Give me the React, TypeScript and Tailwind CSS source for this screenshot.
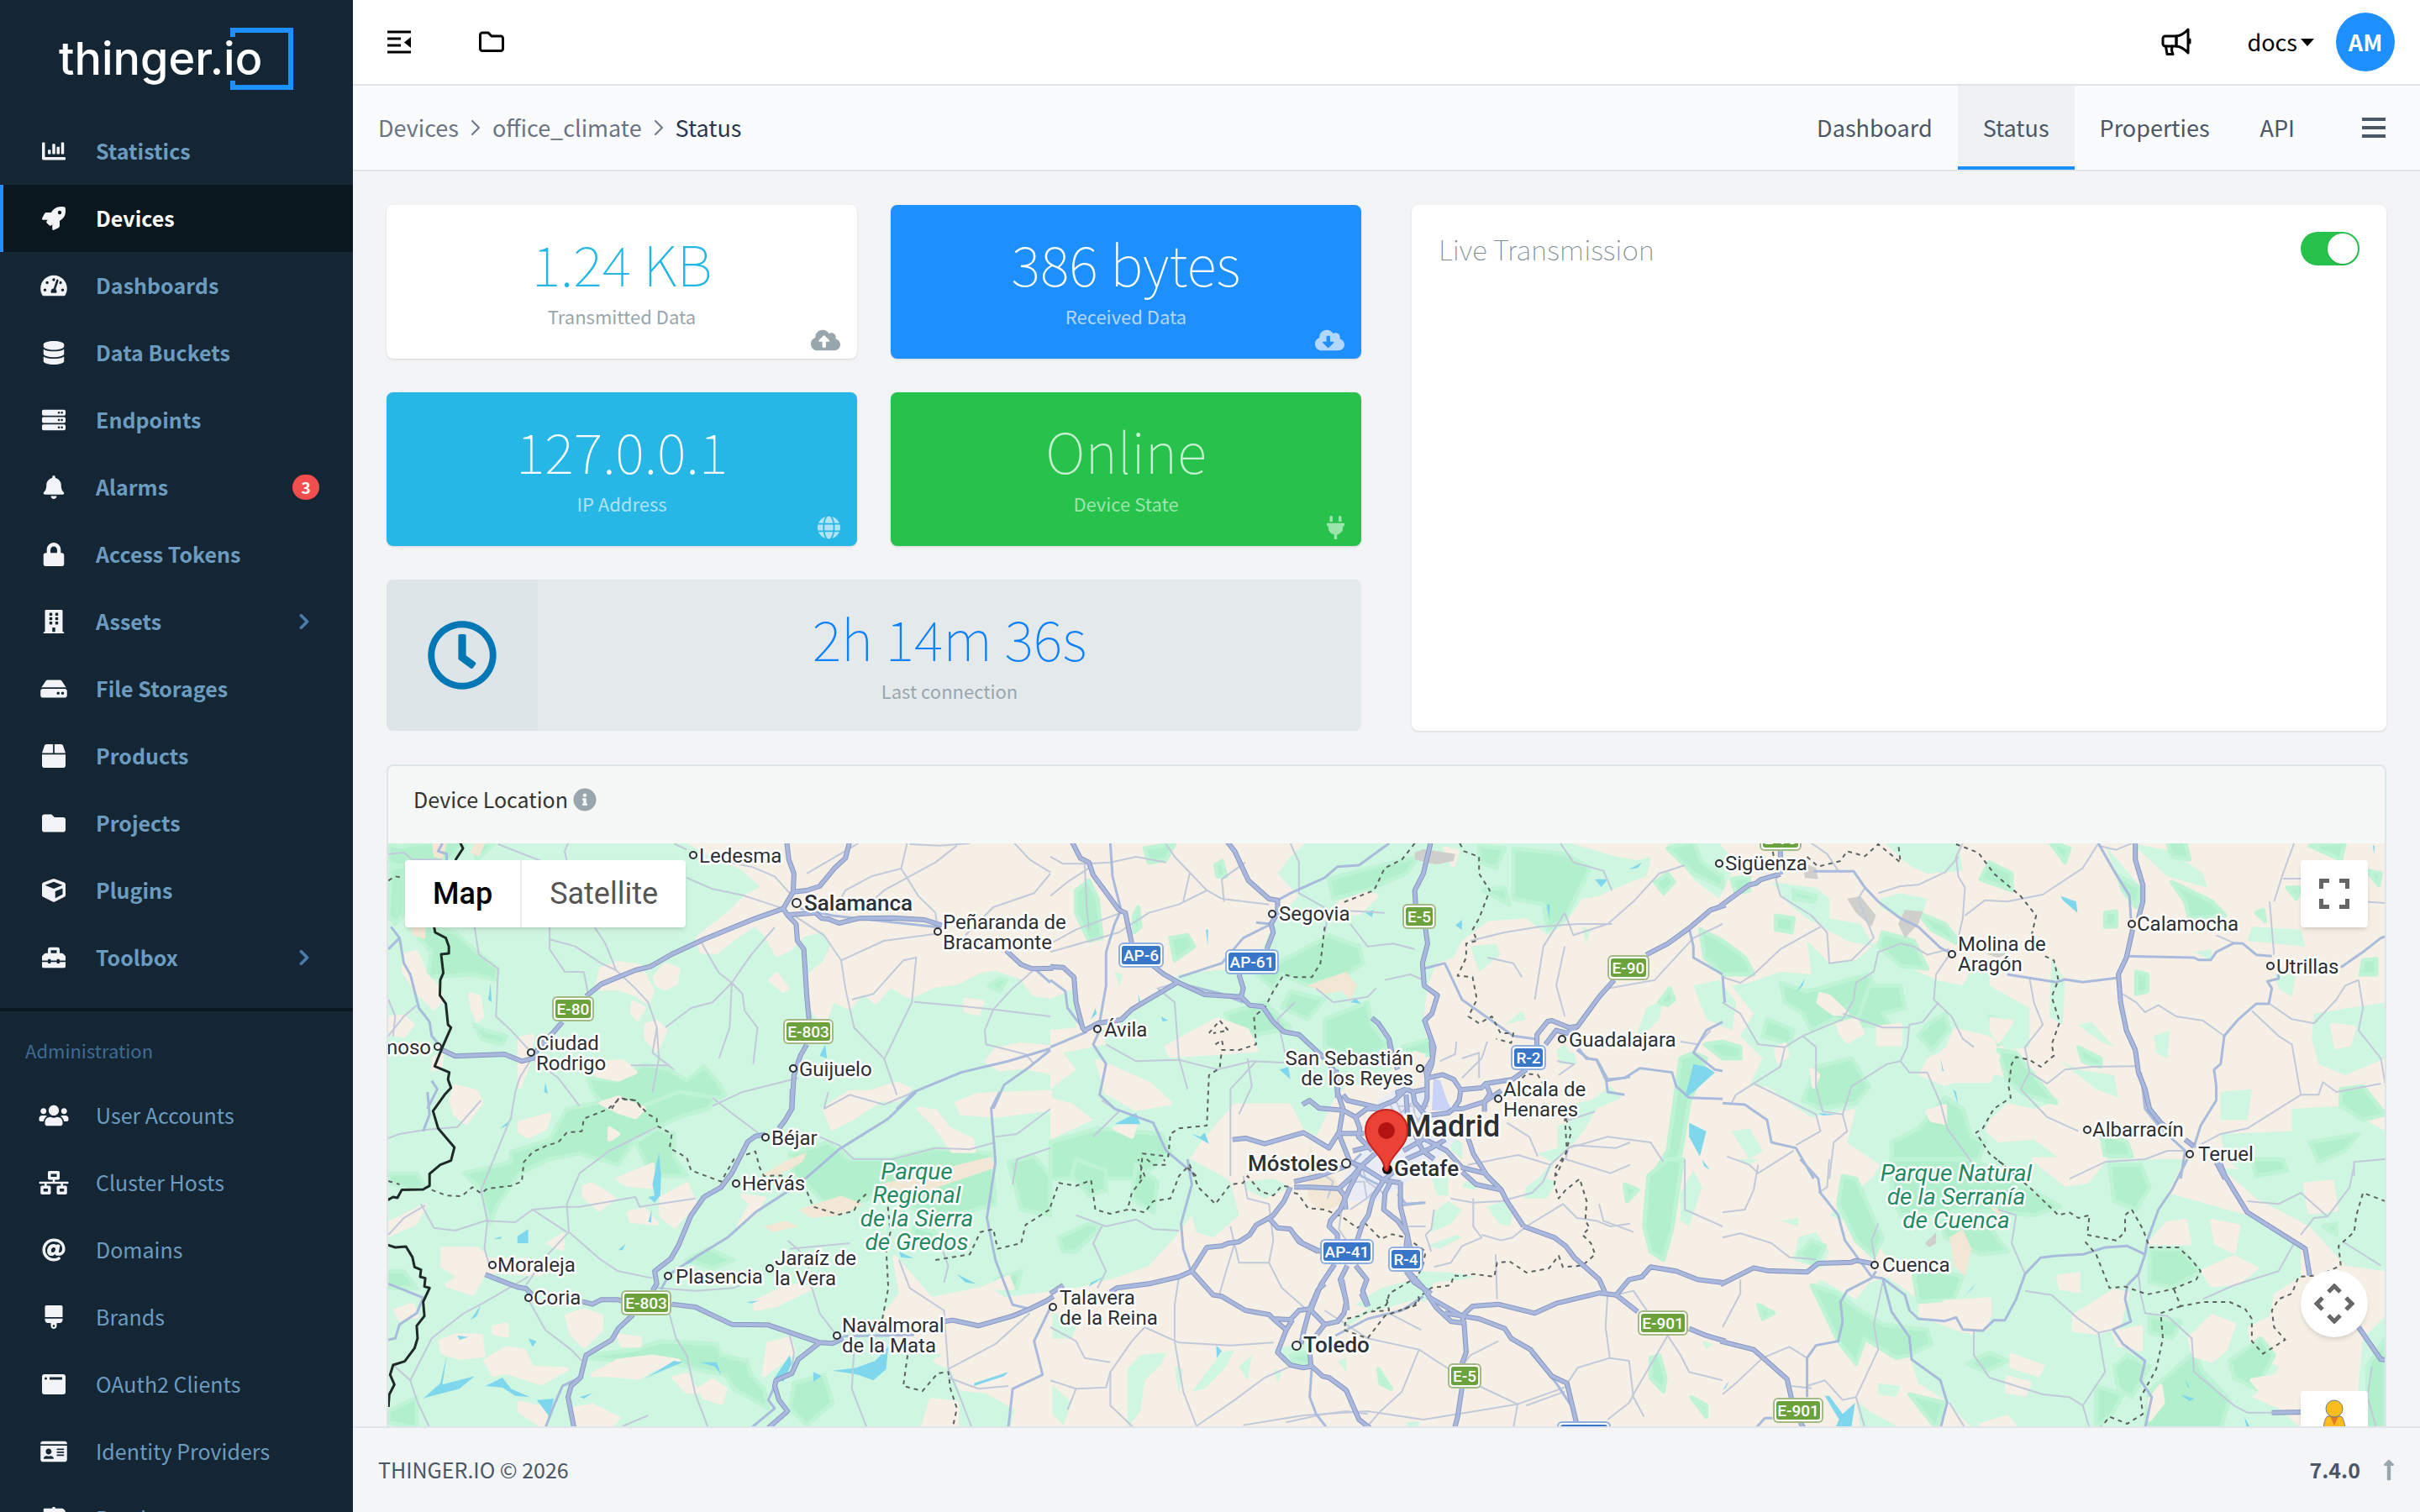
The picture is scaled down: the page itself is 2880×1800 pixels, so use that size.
import type { ComponentType, ReactNode } from 'react';
import {
  FaAt,
  FaBell,
  FaBox,
  FaBrush,
  FaBuilding,
  FaChartBar,
  FaCloudDownloadAlt,
  FaCloudUploadAlt,
  FaCube,
  FaDatabase,
  FaFolder,
  FaGlobe,
  FaHdd,
  FaIdCard,
  FaInfoCircle,
  FaLock,
  FaLongArrowAltUp,
  FaMapSigns,
  FaNetworkWired,
  FaPlug,
  FaRegClock,
  FaRocket,
  FaServer,
  FaTachometerAlt,
  FaToolbox,
  FaUsers,
} from 'react-icons/fa';

type IconType = ComponentType<{ className?: string; preserveAspectRatio?: string }>;

type NavItem = {
  label: string;
  icon: IconType;
  active?: boolean;
  badge?: number;
  expandable?: boolean;
};

function WindowIcon({ className }: { className?: string }) {
  return (
    <svg viewBox="0 0 28 28" fill="currentColor" className={className} aria-hidden="true">
      <path
        fillRule="evenodd"
        d="M3 2h22a3 3 0 0 1 3 3v18a3 3 0 0 1-3 3H3a3 3 0 0 1-3-3V5a3 3 0 0 1 3-3zm1.5 3.5a1.500 1.500 0 1 0 0 3 1.500 1.500 0 0 0 0-3zM9 5.500v3h15v-3z"
      />
    </svg>
  );
}

const mainNav: NavItem[] = [
  { label: 'Statistics', icon: FaChartBar },
  { label: 'Devices', icon: FaRocket, active: true },
  { label: 'Dashboards', icon: FaTachometerAlt },
  { label: 'Data Buckets', icon: FaDatabase },
  { label: 'Endpoints', icon: FaServer },
  { label: 'Alarms', icon: FaBell, badge: 3 },
  { label: 'Access Tokens', icon: FaLock },
  { label: 'Assets', icon: FaBuilding, expandable: true },
  { label: 'File Storages', icon: FaHdd },
  { label: 'Products', icon: FaBox },
  { label: 'Projects', icon: FaFolder },
  { label: 'Plugins', icon: FaCube },
  { label: 'Toolbox', icon: FaToolbox, expandable: true },
];

const adminNav: NavItem[] = [
  { label: 'User Accounts', icon: FaUsers },
  { label: 'Cluster Hosts', icon: FaNetworkWired },
  { label: 'Domains', icon: FaAt },
  { label: 'Brands', icon: FaBrush },
  { label: 'OAuth2 Clients', icon: WindowIcon },
  { label: 'Identity Providers', icon: FaIdCard },
  { label: 'Roadmap', icon: FaMapSigns },
];

function Logo() {
  return (
    <svg viewBox="0 0 288 80" className="h-20 w-72" role="img" aria-label="thinger.io">
      <path d="M207 14V6h69v68h-69v-8" fill="none" stroke="#1e8fff" strokeWidth="6" />
      <text x="0" y="59" fill="#fff" fontFamily="Inter, sans-serif" fontWeight="500" fontSize="54">
        thinger.io
      </text>
    </svg>
  );
}

function Chevron({ className }: { className?: string }) {
  return (
    <svg viewBox="0 0 12 20" fill="none" stroke="currentColor" strokeLinecap="round" strokeLinejoin="round" className={className} aria-hidden="true">
      <path d="M2 2l8 8-8 8" />
    </svg>
  );
}

function NavRow({ item, strong }: { item: NavItem; strong?: boolean }) {
  const Icon = item.icon;
  return (
    <li>
      <a
        href="#"
        className={
          item.active
            ? 'flex h-20 items-center border-l-4 border-[#1e8fff] bg-[#0b171f] pr-10 text-white'
            : 'flex h-20 items-center border-l-4 border-transparent pr-10 text-[#6c9bc0]'
        }
      >
        <span className="ml-10 flex w-10 justify-center text-[#f1f3f6]">
          <Icon className="h-7 w-9" />
        </span>
        <span className={strong ? 'ml-[30px] flex-1 text-[25px] font-bold' : 'ml-[30px] flex-1 text-[25px]'}>
          {item.label}
        </span>
        {item.badge && (
          <span className="flex h-[30px] w-8 items-center justify-center rounded-full bg-[#f34e4e] text-[19px] font-bold text-white">
            {item.badge}
          </span>
        )}
        {item.expandable && <Chevron className="mr-3 h-[18px] w-3 stroke-4 text-[#4a7dab]" />}
      </a>
    </li>
  );
}

function Sidebar() {
  return (
    <aside className="w-[420px] shrink-0 overflow-hidden bg-[#142633]">
      <div className="flex h-[140px] items-start pt-[30px] pl-[70px]">
        <Logo />
      </div>
      <nav>
        <ul>
          {mainNav.map((item) => (
            <NavRow key={item.label} item={item} strong />
          ))}
        </ul>
        <div className="mt-5 border-t-4 border-[#0b171f] pt-6">
          <h2 className="h-[60px] pl-[30px] text-[22px] leading-[44px] text-[#3f6b93]">Administration</h2>
          <ul>
            {adminNav.map((item) => (
              <NavRow key={item.label} item={item} />
            ))}
          </ul>
        </div>
      </nav>
    </aside>
  );
}

function TopBar() {
  return (
    <header className="flex h-[102px] shrink-0 items-center justify-between border-b-2 border-[#e1e4ea] bg-white pr-[30px] pl-[41px] text-black">
      <div className="flex items-center gap-[81px]">
        <button type="button" aria-label="Toggle menu">
          <svg viewBox="0 0 28 28" className="h-7 w-7" aria-hidden="true">
            <path d="M0 2h28M0 10h16M0 18h16M0 26h28" stroke="currentColor" strokeWidth="3" />
            <path d="M28 8v13l-8-6.500z" fill="currentColor" />
          </svg>
        </button>
        <button type="button" aria-label="Projects">
          <svg viewBox="0 0 30 26" className="h-[26px] w-[30px]" fill="none" stroke="currentColor" strokeWidth="3" aria-hidden="true">
            <path d="M4 2h7l4 4h11a2.500 2.500 0 0 1 2.500 2.500V21a2.500 2.500 0 0 1-2.500 2.500H4A2.500 2.500 0 0 1 1.500 21V4.500A2.500 2.500 0 0 1 4 2z" />
          </svg>
        </button>
      </div>
      <div className="flex items-center">
        <button type="button" aria-label="News">
          <svg viewBox="0 0 36 34" className="h-[34px] w-9" fill="none" stroke="currentColor" strokeWidth="3" strokeLinejoin="round" strokeLinecap="round" aria-hidden="true">
            <path d="M5 10h13v12H5a3 3 0 0 1-3-3v-6a3 3 0 0 1 3-3z" />
            <path d="M18 10c5-.5 10-3.500 14-8v28c-4-4.500-9-7.500-14-8z" />
            <path d="M5.500 22l1.500 9.500h7c-1.500-3-2-6-1-9.500" />
            <path d="M34 14v4" strokeWidth="3" />
          </svg>
        </button>
        <button type="button" className="ml-[66px] flex items-center gap-1 text-[27px]">
          docs
          <svg viewBox="0 0 16 10" className="h-[10px] w-4" fill="currentColor" aria-hidden="true">
            <path d="M0 1h16L8 10z" />
          </svg>
        </button>
        <span className="ml-[26px] flex h-[70px] w-[70px] items-center justify-center rounded-full bg-[#1e8fff] text-[27px] font-bold text-white">
          AM
        </span>
      </div>
    </header>
  );
}

function SubBar() {
  const tabs = ['Dashboard', 'Status', 'Properties', 'API'];
  return (
    <div className="flex h-[102px] shrink-0 items-stretch justify-between border-b-2 border-[#e1e4ea] bg-[#f9fbfd] pr-[41px] pl-[30px] text-[27px]">
      <nav aria-label="Breadcrumb" className="flex items-center gap-[14px] text-[#6b7482]">
        <a href="#">Devices</a>
        <Chevron className="h-5 w-3 stroke-2" />
        <a href="#">office_climate</a>
        <Chevron className="h-5 w-3 stroke-2" />
        <span className="text-[#2b3648]">Status</span>
      </nav>
      <div className="flex text-[#4b5666]">
        {tabs.map((tab) => (
          <a
            key={tab}
            href="#"
            className={
              tab === 'Status'
                ? 'flex items-center border-b-4 border-[#1e8fff] bg-[#eff1f2] px-[30px] pt-1'
                : 'flex items-center px-[30px]'
            }
          >
            {tab}
          </a>
        ))}
        <button type="button" aria-label="More" className="ml-[50px] flex flex-col justify-center gap-[6px]">
          <span className="h-1 w-7 bg-current" />
          <span className="h-1 w-7 bg-current" />
          <span className="h-1 w-7 bg-current" />
        </button>
      </div>
    </div>
  );
}

function StatCard({
  value,
  label,
  icon: Icon,
  card,
  valueTone,
  labelTone,
}: {
  value: string;
  label: string;
  icon: IconType;
  card: string;
  valueTone: string;
  labelTone: string;
}) {
  return (
    <div className={`relative flex h-[183px] flex-col items-center rounded-lg pt-7 shadow-sm ${card}`}>
      <div className={`mb-1 text-[66px] leading-[80px] font-thin ${valueTone}`}>{value}</div>
      <div className={`text-[22px] leading-[40px] ${labelTone}`}>{label}</div>
      <Icon preserveAspectRatio="xMaxYMid meet" className={`absolute right-5 bottom-2 h-7 w-9 ${labelTone}`} />
    </div>
  );
}

function Stats() {
  return (
    <div className="grid grid-cols-2 gap-10">
      <StatCard value="1.24 KB" label="Transmitted Data" icon={FaCloudUploadAlt} card="bg-white" valueTone="text-[#23b7e5]" labelTone="text-[#98a6ad]" />
      <StatCard value="386 bytes" label="Received Data" icon={FaCloudDownloadAlt} card="bg-[#1e8fff]" valueTone="text-white" labelTone="text-[#b3d8ff]" />
      <StatCard value="127.0.0.1" label="IP Address" icon={FaGlobe} card="bg-[#26b7e7]" valueTone="text-white" labelTone="text-[#b0e3f5]" />
      <StatCard value="Online" label="Device State" icon={FaPlug} card="bg-[#27c24c]" valueTone="text-[#c6f0d0]" labelTone="text-[#9be5ad]" />
      <div className="col-span-2 flex h-[180px] overflow-hidden rounded-lg bg-[#e4eaec]">
        <div className="flex w-[180px] items-center justify-center bg-[#dde5e8]">
          <FaRegClock className="h-[84px] w-[84px] text-[#0277b5]" />
        </div>
        <div className="flex flex-1 flex-col items-center pt-7">
          <div className="mb-1 text-[66px] leading-[80px] font-thin text-[#0d80ff]">2h 14m 36s</div>
          <div className="text-[22px] leading-[40px] text-[#98a6ad]">Last connection</div>
        </div>
      </div>
    </div>
  );
}

function LiveTransmission() {
  return (
    <section className="rounded-lg bg-white px-8 py-8 shadow-sm">
      <div className="flex h-10 items-center justify-between">
        <label htmlFor="live" className="text-[33px] leading-9 font-thin text-[#7d8a91]">
          Live Transmission
        </label>
        <input
          id="live"
          type="checkbox"
          role="switch"
          defaultChecked
          className="flex h-10 w-[70px] appearance-none items-center justify-end rounded-full bg-[#27c24c] px-[2px] before:h-9 before:w-9 before:rounded-full before:bg-white before:shadow"
        />
      </div>
    </section>
  );
}

/* ---------- map data ---------- */

type Tile = {
  x: number;
  y: number;
  sx: number;
  light?: string[];
  forest?: string[];
  land?: string[];
  sand?: string[];
  rock?: string[];
  water?: string[];
  thin?: string[];
  medium?: string[];
  major?: string[];
  region?: string[];
  country?: string[];
};

const W = 0.5102;
const E = 0.5293;

const tiles: Tile[] = [
  // Salamanca
  {
    x: 450, y: 900, sx: W,
    light: ['20,300 1568,300 1568,1260 20,1260'],
    land: [
      '720,300 760,340 850,400 900,470 860,500 820,560 770,620 745,650 755,700 790,700 830,650 880,600 905,640 930,710 960,690 990,640 1040,620 1060,680 1040,740 1000,790 1010,900 1040,960 1060,870 1100,900 1130,840 1160,880 1195,820 1240,860 1300,820 1350,810 1400,770 1440,760 1500,790 1530,850 1568,860 1568,300',
      '510,830 520,760 560,740 610,750 640,840 630,880 600,850 560,830',
      '645,790 670,745 700,760 695,810 670,830 650,815',
      '915,800 930,780 955,830 945,838', '595,880 620,900 605,940 592,915',
      '62,710 90,700 110,780 140,830 150,870 130,900 90,840 60,770', '215,850 235,860 243,930 232,945 220,900',
      '180,1180 230,1200 240,1240 205,1310 180,1280 170,1230', '625,960 650,950 670,980 650,1050 625,1010',
      '1420,1090 1440,1050 1500,1030 1568,1040 1568,1130 1500,1110 1450,1120', '500,1100 570,1090 600,1130 560,1155 510,1140',
      '1150,1200 1210,1170 1240,1190 1210,1230 1160,1225', '330,1010 360,1000 350,1100 330,1180',
      '24,935 60,930 80,960 60,1000 30,990', '130,1080 150,1060 145,1110 128,1120', '1370,870 1410,880 1400,920 1370,910',
    ],
    forest: [
      '24,312 50,325 130,305 210,305 160,380 120,372 60,400 24,380', '30,400 62,390 62,560 40,600 24,570',
      '115,612 180,630 230,700 280,760 275,800 220,780 115,790 125,700 95,650', '230,305 270,315 230,370 225,340',
      '490,1150 560,1160 620,1100 680,1120 720,1160 760,1110 790,1160 810,1210 700,1290 540,1270 500,1200',
      '1425,820 1450,795 1465,800 1450,840', '225,960 250,980 300,1000 290,1030 240,1010',
    ],
    water: ['257,870 262,810 265,880', '387,1200 390,1165 396,1205', '1030,1070 1043,1030 1047,1080', '285,1330 315,1290 300,1320'],
    sand: ['125,312 160,312 150,370 130,360', '225,312 250,312 235,360 215,345', '75,600 110,600 110,655 80,640'],
    thin: [
      '24,350 60,345 80,370 150,370', '280,315 380,375', '445,305 435,340 440,372', '690,312 720,335', '225,612 235,710 280,760 275,930 310,980 355,1055',
      '400,612 400,690 435,770 480,772 490,850', '505,612 530,670 555,765 600,830 630,880 650,970 640,1060 690,1120',
      '755,670 795,775 825,810 850,850 855,910 885,970 875,1100', '925,612 870,710 825,810 820,970 795,1080',
      '825,810 780,880 730,900 670,970', '720,435 780,475 850,497 945,545', '800,375 870,395 925,430 960,490',
      '1150,430 1220,402 1260,500 1300,560 1305,620', '960,560 1040,640 1080,730 1090,830 1110,970 1180,1080 1210,1210',
      '1080,730 1180,660 1300,635', '1105,870 1155,850 1225,730 1255,720 1245,880 1180,1085', '1250,878 1360,893 1435,905 1568,930',
      '1568,415 1520,370 1480,305', '1220,402 1235,305', '1120,312 1000,420', '1350,320 1300,380 1180,480 1130,550',
      '1568,420 1530,490 1435,540 1370,640', '1435,905 1415,980 1418,1030 1510,1065 1530,1100', '400,655 460,680 520,740 555,765',
      '590,1105 680,1105', '360,1075 330,1150 320,1200', '24,1000 60,930 90,890', '980,1150 850,1200 780,1250', '1150,430 1090,480 1060,560',
      '24,870 40,930 35,1000', '1240,315 1310,320 1380,312', '1435,905 1480,830 1525,770', '650,970 655,1080 640,1200', '355,1075 420,1150 470,1250',
    ],
    medium: [
      '1568,1045 1470,1090 1360,1130 1250,1200 1210,1260', '1568,1050 1520,1110 1460,1175 1435,1260', '1535,765 1568,810',
      '30,610 50,650 60,740 75,780 95,900 120,950 125,1000 150,1045', '125,1160 138,1190 115,1260', '985,545 1060,570 1310,612', '24,690 50,650', '150,312 140,340 160,350 160,372',
    ],
    major: [
      '150,1050 180,1072 295,1065 335,1090 360,1080 375,1040 410,985 430,950', '485,858 520,815 600,765 635,752 685,708 760,655 880,580 945,545',
      '953,305 958,370 970,420 968,485 945,545 955,568 975,600 978,660 993,690 1000,860 1005,940', '1000,1030 985,1070 970,1140 965,1260',
      '1100,305 1090,365 1065,400 1030,465 1000,480 968,485',
      '955,568 1020,560 1035,580 1050,582 1075,597 1120,580 1200,578 1275,585 1315,605', '1465,695 1500,745 1525,760 1575,758',
    ],
    region: ['24,445 40,430 60,435', '545,1260 560,1225 600,1230 615,1260'],
    country: [
      '190,305 198,330 180,372',
      '130,605 133,630 158,650 165,680 165,705 147,708 152,775 145,800 144,855 158,885 163,960 170,970 150,1040 132,1108 166,1130 163,1155 170,1185 155,1210 128,1268 140,1330 178,1398 170,1445 145,1460 120,1492 120,1535 105,1548 55,1550 45,1578 35,1575 20,1588',
    ],
  },
  // Plasencia, Sierra de Gredos
  {
    x: 450, y: 1300, sx: W,
    light: ['20,0 1568,0 1568,1200 20,1200'],
    forest: [
      '310,215 400,170 440,60 540,30 600,60 700,0 790,20 770,60 700,90 600,170 560,260 470,220 400,240 330,290 280,400 260,470 240,350 200,290 310,250',
      '600,180 650,130 690,150 690,230 720,300 640,300', '24,290 90,290 110,340 70,350 24,320',
      '960,220 1050,180 1100,240 1190,240 1300,200 1430,220 1440,400 1300,460 1180,360 1060,430 1000,330 970,300',
      '1470,250 1530,230 1568,300 1568,440 1500,420', '490,940 600,920 660,890 790,900 800,940 860,960 870,1010 900,1060 910,1130 830,1060 810,1010 740,990 650,950 560,960 490,950',
      '970,1040 1040,1010 1060,1110 1000,1190 960,1130', '24,1140 90,1090 90,1200 24,1180', '770,560 830,600 780,630 720,600', '1440,670 1500,640 1490,700 1440,700',
      '20,640 60,640 90,700 20,700', '1250,480 1300,500 1290,560 1240,540',
    ],
    land: [
      '330,110 400,80 390,130 350,160 330,140', '1040,60 1100,0 1200,0 1110,90 1060,130', '1260,60 1300,70 1330,130 1385,170 1390,210 1340,210 1300,120',
      '1350,40 1400,10 1568,0 1568,60 1440,85 1360,75', '24,470 110,405 85,470 24,510',
      '150,560 230,560 260,600 350,600 380,650 250,640 220,720 160,690 190,660 150,620', '480,340 500,330 550,380 515,420 480,370', '560,310 640,260 640,340 580,330',
      '585,430 620,420 650,470 590,460', '660,380 720,330 740,400 690,480 660,440', '145,890 180,870 240,870 245,940 190,950 150,930',
      '250,960 300,915 340,925 360,985 440,990 380,1040 300,1000 270,1010', '440,800 480,780 520,800 520,850 480,910 450,860', '560,870 610,880 610,905 570,905',
      '460,1130 500,1120 560,1165 540,1200 470,1200 455,1150', '500,1010 560,960 640,945 700,960 640,990 610,1020 530,1010', '690,1020 720,1010 745,1070 720,1070',
      '750,1060 780,1030 810,1060 800,1110 760,1090', '880,750 960,690 1010,700 930,760 880,775', '850,370 900,380 880,430 840,480 870,400',
      '1180,800 1220,720 1205,590 1290,740 1420,700 1460,740 1568,720 1568,1200 1480,1200 1490,1130 1420,1070 1360,1060 1340,990 1300,960 1330,940 1260,900 1210,880',
      '1290,1100 1350,1110 1350,1200 1270,1200', '330,1110 390,1130 390,1200 330,1140', '1415,700 1470,660 1480,700', '520,40 560,20 620,60 600,90 560,70',
      '40,780 80,760 90,800 50,810', '910,900 960,880 970,930 900,1010', '270,840 300,830 300,870 270,860', '540,130 560,150 540,170', '400,540 430,510 430,560', '1500,1010 1530,1080 1490,1060',
    ],
    sand: ['890,300 960,240 1000,215 990,250 930,300', '1170,330 1430,230 1440,270 1250,370 1180,350', '980,420 1080,370 1130,400 1080,440 1010,450', '900,480 950,460 980,480 920,500'],
    water: [
      '640,330 655,215 660,300 658,370 645,395 630,375 645,370', '325,515 350,490 350,540 325,540', '105,1095 145,1040 160,940 150,1045 225,1015 190,1060 115,1090', '250,1050 290,1020 310,1060 355,1090 320,1085 290,1055',
      '370,1100 410,1095 400,1160 385,1130', '620,1025 690,960 710,965 640,1010', '750,965 790,965 800,1010 785,980', '1115,985 1160,960 1190,910 1185,990 1155,1030 1120,1010 1060,995', '1015,1000 1035,1015 1015,1035',
      '925,1020 960,940 965,970 945,1035', '1350,650 1395,685 1370,680', '1215,570 1250,595 1220,590', '710,620 750,580 730,610', '470,1090 500,1075 480,1095', '1390,1040 1470,1000 1460,1015 1390,1050', '185,870 210,875 190,885', '350,880 370,890 360,910',
      '215,815 240,760 230,800', '560,565 577,542 570,565', '630,465 638,420 637,465', '270,525 288,515 285,525', '860,750 890,745 870,755',
    ],
    thin: [
      '320,0 310,90 240,350 255,460 248,560 260,620', '24,165 50,150 110,135 185,125 240,30', '100,400 130,485 180,495 250,460 320,465 360,420 430,410 470,410 600,375 610,410 740,380',
      '650,125 540,210 470,290 440,400 445,500 390,590 345,690', '445,500 520,600 560,640 640,665', '360,420 440,500', '350,740 390,850 450,920 475,960', '680,795 695,880 720,940 740,1080 770,1200',
      '120,1200 90,1100 75,1030 35,975', '75,1030 125,880 200,790 250,750 350,660', '1075,190 1110,240 1200,240 1300,200 1380,205 1440,180', '1010,690 1030,790 1070,870', '955,530 1000,590 1010,700', '960,870 970,930 965,1000',
      '1110,930 1105,1060 1140,1200', '1215,600 1240,700 1320,780 1330,990 1360,1100 1385,1200', '1330,990 1440,900 1520,790', '780,20 820,70 890,150', '1050,0 1040,60 1100,10 1180,45 1250,0',
      '1440,160 1490,150 1568,60', '1480,330 1490,240 1568,200', '24,510 60,450 110,405', '650,700 740,710 830,700 900,650', '1330,1020 1400,1060 1470,1050', '570,1194 630,1155', '1100,540 960,560', '1310,540 1330,620 1320,680', '1030,160 1075,190',
    ],
    medium: [
      '1255,0 1190,95 1075,205 1000,305 960,350 880,430 815,520 740,590 680,650 660,705', '1450,0 1430,60 1440,250 1420,450 1440,600 1480,760 1520,775', '472,1020 430,1050 410,1120 390,1200',
      '1568,770 1530,890 1550,1010 1480,1060 1470,1200', '925,1050 910,1100 925,1130 870,1200', '24,685 105,735 90,790 50,830 40,880 24,885', '115,0 120,80 105,140', '1085,872 1250,868',
    ],
    major: [
      '966,-10 965,60 950,100 935,130', '903,152 880,158 862,178 845,230 825,290 800,340 760,375 730,440 700,550 683,595 645,640 650,685 640,710', '595,795 560,845 545,885 485,940 472,1020 450,1050 443,1090 457,1200',
      '250,652 325,697 345,702 360,725', '475,748 500,758 520,742 560,742 570,748', '685,758 740,768 825,830 910,832 1030,895 1060,898 1085,880', '1030,895 980,955 965,1005 928,1030 925,1050 935,1100 955,1140 910,1200',
      '1320,820 1340,815 1400,835 1480,800 1520,775 1560,745 1575,730',
    ],
    region: [
      '24,318 50,330', '125,350 160,370 195,372 220,340 240,362 255,345 310,335 335,320 340,250 360,215 395,190 420,180 440,145 475,140 480,95 535,62 565,22 600,30 630,80 650,95 650,120 685,150 680,200 720,235 730,280 800,320 830,240 880,212 890,270 900,300 940,298 1000,355 1015,410 1075,438 1110,425 1120,390 1145,355',
      '1185,350 1195,500 1185,560 1190,700 1175,820', '1300,600 1380,580 1405,500 1435,490 1445,560 1500,540 1510,475 1568,418', '1235,940 1225,1050 1270,1068 1305,1005 1330,1000 1335,1060 1350,1130 1340,1200',
    ],
    country: ['20,545 40,555 65,552 80,590 85,625 100,635 98,660 110,665 108,695 120,700 105,750 108,800 90,835 92,880 85,915 62,962 35,975 28,1010 38,1045 26,1080 24,1125'],
  },
  // Segovia, Guadarrama
  {
    x: 1250, y: 960, sx: W,
    light: [
      '530,240 560,180 600,125 960,125 1050,125 1200,125 1320,180 1400,200 1390,250 1320,290 1280,320 1240,330 1200,420 1160,460 1110,400 1020,410 960,480 940,540 900,560 880,640 870,760 880,860 850,900 790,860 760,870 800,940 740,990 690,1000 660,1050 620,1180 590,1150 560,1060 430,1060 350,1200 300,1320 0,1320 0,1190 100,1120 50,1060 0,1040 0,1010 60,940 30,880 130,850 120,800 230,700 300,600 420,580 480,560 520,420 580,320',
      '980,500 1040,490 1050,530 1000,590', '1180,870 1200,850 1220,900 1190,920', '-20,700 60,650 60,790 -20,800', '1390,720 1430,690 1420,760 1360,850', '1060,780 1100,730 1110,760', '1240,430 1260,440 1250,490', '1350,200 1400,180 1390,240 1340,240',
      '150,590 170,600 160,640', '1500,640 1560,620 1600,700 1590,800 1530,760', '1440,132 1560,132 1600,200 1560,330 1500,260',
    ],
    land: ['270,860 390,760 460,800 480,870 400,880 280,890', '110,910 230,990 280,1060 200,1080 130,1020', '680,340 740,310 760,320 720,380 640,390', '150,1150 200,1130 190,1180', '850,880 870,890 850,920', '920,150 950,160 940,210'],
    sand: ['600,640 690,590 715,640 700,690 680,660 640,670'],
    forest: [
      '650,260 720,230 800,200 860,180 830,240 740,300 660,330', '1080,150 1200,170 1260,220 1240,280 1200,400 1160,440 1150,350 1080,330', '410,740 500,700 560,790 470,820 420,800',
      '580,520 650,460 720,500 730,560 690,600 600,640 540,600 520,650 480,600', '640,760 740,700 750,780 790,860 720,900 640,860 640,800', '0,1200 110,1150 260,1170 280,1230 210,1330 0,1330', '820,860 890,830 890,890 830,880',
      '60,300 90,265 110,330 120,470 90,480 60,380', '220,150 290,132 270,190 230,200', '385,210 400,195 410,250 390,250', '195,390 205,360 210,430 195,450', '280,470 320,460 335,500 290,550', '1410,270 1440,240 1455,270 1430,310',
      '1420,700 1445,650 1455,690 1440,710', '1440,150 1500,125 1520,200 1568,250 1568,290 1500,240', '1470,900 1500,880 1530,900 1490,1060 1470,1240 1440,1330 1400,1330 1440,1230', '560,660 640,690 600,760 540,720', '1000,140 1060,150 1040,220 1000,200', '1010,300 1060,290 1070,350',
    ],
    rock: ['850,165 870,152 945,170 940,195 900,208 850,190'],
    water: [
      '150,1135 200,1095 210,1135', '330,1170 350,1180 360,1165 370,1205', '535,940 555,930 560,975', '700,700 712,685 725,705', '735,380 755,370 750,395', '945,425 960,405 960,440', '1270,260 1300,260 1285,288', '1350,225 1380,200 1370,220',
      '1500,920 1530,930 1550,950 1500,1020 1480,1040', '1490,1130 1530,1160 1515,1250 1490,1180', '1070,210 1085,245', '95,760 105,720 108,740', '363,440 368,440 367,500', '1158,350 1165,350 1164,400', '258,750 275,765 262,768', '205,670 210,700 206,710',
    ],
    thin: [
      '0,180 30,205 80,205 140,200 200,180 270,200', '0,320 40,270 90,220', '270,135 290,180 365,300 400,330 510,350', '325,240 310,340', '365,300 300,350 230,380 160,450 0,520', '455,200 400,260 405,340', '80,205 85,360 90,440', '560,132 580,200 580,310 650,370 640,450',
      '0,490 60,440 165,380', '130,850 200,910 300,905 290,700 250,650 295,630', '300,905 390,940 470,910 620,920', '320,1010 300,900', '120,1050 160,1090 100,1180', '420,1320 420,1010 480,910', '1360,340 1420,240 1480,210', '1360,340 1300,420 1220,460 1200,380',
      '1100,610 1080,560 1020,540', '1130,690 1150,500 1200,380', '1200,750 1180,640 1200,500', '980,480 1060,450 1140,430 1230,420 1310,420', '780,380 660,370', '700,420 740,500 800,490 850,510', '780,620 840,600 870,620', '620,650 660,700 740,680 760,650',
      '1568,420 1500,470 1410,620 1300,650', '1210,1220 1300,1180 1400,1200 1430,1270', '1150,1060 1210,1120 1270,1090', '960,900 1000,880 1000,970', '1470,840 1510,850 1540,800', '1190,132 1220,200 1290,230 1310,300', '460,900 470,1000 440,1100', '570,700 530,760 550,900',
    ],
    medium: [
      '140,132 145,250 165,370', '115,770 130,640 130,520 150,420 165,370', '790,132 720,210 670,215 640,255 560,310 530,335', '300,610 400,560 450,470 515,420 480,415', '0,620 35,660 40,720 75,790', '115,800 100,850 130,920 115,1030 150,1080 240,1130 270,1230 340,1320',
      '295,630 400,670 450,700', '0,860 85,805', '1490,435 1500,500 1500,540 1568,600', '1215,800 1230,860 1250,900 1275,905 1300,975 1340,970 1375,935 1450,950 1460,1000 1490,1040 1568,1045', '1568,770 1530,800 1500,880 1550,940 1568,945', '870,610 870,580 920,560 960,690 1080,820 1130,830',
    ],
    major: [
      '50,125 70,185 90,200 100,245 160,370 175,380 190,490', '240,570 265,600 300,630 360,672 445,680', '440,600 450,650 445,680 465,710 495,715 520,770 545,805 580,815 640,900 670,960 670,1040', '412,125 430,160 462,265 510,330 530,335 530,380 515,420 520,450 505,510',
      '0,572 30,575 55,610 60,700 75,790 80,800 110,775 165,762 190,725 295,630', '888,125 870,240 850,300 852,350', '875,436 880,490 868,560 872,640 903,675 890,740 873,765 895,860 890,920 880,960',
      '1575,352 1540,370 1490,435 1440,490 1390,530', '1315,620 1280,680 1230,785 1210,790 1170,765 1160,768 1135,815 1135,860', '1230,785 1205,810 1180,800 1155,850', '750,755 765,775 790,830 800,900 810,940', '425,1190 455,1185 500,1205 590,1165 650,1220 675,1160',
    ],
    region: [
      '850,132 820,190 780,220 755,300 680,345', '640,430 630,560 610,610 570,610 545,600 520,660 500,720 475,750 480,850 440,870 400,870 395,935 370,960 365,1140 300,1150 280,1170 275,1250 215,1240 210,1330', '370,810 395,765 415,800 380,810', '385,850 400,835 405,870',
      '955,132 965,160 1000,180 1000,240 1025,300 1000,400 985,440 995,480 970,490 970,540 950,605 985,610 995,690 975,750 1000,775 1030,750 1050,810 1080,810 1075,845 1040,830', '1200,1110 1205,1230 1180,1320', '320,1290 340,1320',
    ],
  },
  // Toledo
  {
    x: 1250, y: 1380, sx: W,
    light: [
      '0,0 330,0 400,60 420,80 440,200 380,280 340,260 330,200 290,280 230,380 160,420 60,460 0,460', '0,540 60,600 50,640 0,640', '180,750 210,700 270,690 260,730 220,790 210,900 180,960', '330,830 400,690 430,680 410,740 360,820', '440,740 470,700 460,790', '520,680 600,650 600,720 560,720', '670,720 690,710 690,760',
      '760,740 800,820 770,810', '680,590 790,490 860,430 890,450 880,490 740,550 690,600', '0,800 50,870 30,950 0,900', '290,740 310,750 300,840', '520,750 540,760 530,800', '1520,650 1545,660 1530,680', '450,80 520,70 560,100 500,140 460,110', '830,940 860,935 860,960 830,960', '1470,120 1500,40 1520,100 1490,240 1470,220',
    ],
    forest: ['20,280 90,230 120,240 60,330 30,330', '200,20 250,80 240,190 190,140', '60,0 130,40 130,110 90,130 50,60', '1395,60 1440,0 1475,0 1450,250 1430,360 1400,330 1385,240', '1340,90 1370,110 1345,150', '1400,710 1420,700 1435,780 1430,830 1400,780', '1495,850 1530,880 1530,920', '560,700 600,690 605,740 565,720', '765,750 795,820 770,800'],
    sand: ['610,70 660,60 690,150 650,180 615,140'],
    water: ['90,455 125,420 95,440', '387,665 400,685 388,710', '1520,0 1538,38 1525,25'],
    thin: [
      '450,60 460,140 510,160 520,290 510,370 540,460 600,540', '40,895 60,820 130,815 140,760 190,650 220,600 300,655 420,665 520,655', '140,760 140,880 195,960', '430,300 410,400 395,480', '300,420 290,520 290,650 310,830 340,950', '340,954 430,860 500,780 560,740', '450,950 590,915 740,900 870,930 1090,875', '1000,810 1090,875 1080,960',
      '1090,875 1200,815', '640,540 740,640 860,680 930,750', '860,680 820,830 770,900 740,954', '865,610 790,550', '1300,480 1295,600 1305,710 1230,745 1200,815', '1305,710 1350,720 1360,850 1385,920', '1300,930 1350,870 1360,840 1440,630 1470,700 1490,760 1568,790', '0,790 60,820', '420,240 440,370 510,370', '1480,0 1480,180 1568,240',
      '60,200 130,240 200,215 240,250 300,255', '120,240 100,300 130,400 110,460', '0,600 60,650 80,710 140,725', '550,940 640,910 690,900 740,910', '1045,650 980,700 960,740', '1400,560 1360,470 1320,485', '1110,880 1200,830', '1280,160 1290,220 1360,260',
    ],
    medium: ['320,0 330,90 305,230 310,320 328,400', '665,630 740,570 820,540 870,490', '610,740 605,850 620,910 645,960', '820,165 870,155', '1120,690 1180,800 1215,880'],
    major: [
      '560,100 545,150 520,200 510,210 480,235 465,270 440,295 415,300 400,310 365,315 330,400 300,420 230,445 155,460 140,475', '0,480 30,450', '510,210 530,245 560,250 580,295 625,330', '330,400 380,485 400,490 455,540 510,555 520,570 560,573 580,540 605,535 640,590 670,580 685,550 690,510',
      '605,535 590,620 585,660', '620,630 640,590', '520,570 550,610 530,690 560,735 590,745 610,740 635,775 650,780 690,825 720,930 745,960', '550,610 565,573', '605,690 608,740', '835,400 870,460 900,530 935,580 965,585 970,690 960,730', '880,490 960,560 985,525 1045,518 1130,550 1180,515 1280,478 1320,485 1350,430 1380,420 1400,385 1460,400 1510,430 1575,442',
      '960,560 1000,570 1060,605 1075,640 1120,680 1170,775 1205,800 1230,960', '1320,485 1370,545', '1490,605 1530,630 1575,650', '960,818 950,920 943,960', '920,550 960,560 965,585', '605,535 625,465 640,445', '690,510 680,430', '740,525 725,480',
    ],
    region: ['0,170 20,85 60,95 95,75 105,180 140,195 180,180 190,120 220,60 205,0', '190,180 220,190 240,150 280,140 300,60 325,20 345,100 385,160 420,90 450,85 460,60 490,115 520,130 540,95 565,100', '225,0 240,20 270,20 265,0', '785,500 790,540 740,545 720,560 690,570 685,610 740,640 780,560 850,520 860,490'],
  },
  // Teruel north
  {
    x: 2050, y: 960, sx: E,
    light: [
      '20,640 60,630 130,590 200,600 190,480 240,560 300,550 350,480 420,490 400,560 480,620 540,640 560,580 600,560 600,640 690,720 690,860 640,870 600,820 520,790 500,870 460,900 440,960 500,1000 560,960 620,960 700,1000 760,1050 700,1080 640,1060 600,1120 590,1160 620,1200 700,1190 760,1260 780,1330 400,1330 280,1200 300,1080 200,1110 150,1060 100,1000 60,1000 90,900 40,820 70,740',
      '360,125 530,125 540,230 460,240 420,210', '110,270 210,290 240,330 240,400 310,420 340,500 280,480 190,400 150,350', '355,330 400,310 460,330 450,380 400,400 355,360', '800,780 830,770 880,860 850,840', '1190,430 1300,440 1310,500 1180,480', '1120,1020 1190,1010 1180,1120 1120,1120', '970,820 1005,800 1000,900 975,880',
      '1330,740 1490,700 1490,900 1400,960 1340,920 1325,830', '1280,1080 1390,1070 1490,1160 1490,1330 1190,1330 1130,1260 1120,1170 1280,1160', '20,1160 60,1150 90,1230 60,1260', '920,132 1010,160 1080,240 1090,290 1000,250', '760,910 800,940 880,960 890,1040 840,1010', '860,140 930,270 930,330 900,300', '1060,520 1100,510 1100,550', '1240,600 1290,590 1280,680 1250,650', '740,540 770,620 765,780 735,750',
    ],
    forest: [
      '-50,440 0,480 50,540 70,600 0,600 -40,540', '130,630 190,660 220,650 280,620 330,600 350,680 350,780 250,760 200,800 180,740 140,700', '330,640 400,640 410,720 360,740 380,790 300,780', '210,930 290,900 330,1000 300,1060 220,1080 180,1050', '360,450 430,480 460,580 400,570 350,500', '380,1200 440,1150 500,1040 540,1080 560,1180 590,1200 560,1330 380,1330',
      '460,780 500,740 510,800 470,870 440,820', '620,870 660,880 750,1060 680,1030 640,980', '1010,270 1100,340 1130,390 1050,400 1040,340', '860,380 885,375 885,430 860,430', '930,590 955,600 955,660 930,670', '1320,140 1400,125 1390,190', '1440,550 1470,545 1470,600 1435,600', '1450,230 1480,240 1475,280', '1270,290 1300,290 1290,330',
      '890,250 940,290 930,360 900,300', '735,125 780,150 770,200', '1200,380 1215,370 1220,410', '800,860 850,900 850,930 810,910', '120,390 160,400 155,450 120,440', '160,300 210,320 205,340 160,330', '1390,1010 1440,1000 1490,1100 1440,1120 1390,1070', '850,1160 910,1200 920,1250 860,1250', '1320,1200 1430,1170 1400,1230 1340,1270', '600,200 650,240 650,300 580,260',
      '-40,850 0,840 40,860 40,900 0,900', '1000,125 1040,125 1050,190 1010,180', '440,380 500,420 540,500 470,440', '100,760 160,800 150,850 90,820', '20,260 60,250 60,300 30,310', '600,750 640,770 620,850',
    ],
    land: ['220,670 240,680 280,740 250,740 215,700', '260,780 300,760 315,810 280,840 265,810', '350,790 400,780 400,850 350,850', '500,870 540,890 620,890 600,980 500,980 480,900', '605,760 650,770 620,840 605,800', '120,870 140,850 145,890 125,910', '200,940 215,960 205,1000', '1370,780 1420,790 1410,850 1380,860', '460,1090 500,1070 500,1130 470,1120', '640,1110 700,1100 720,1150 660,1170'],
    rock: ['280,330 310,320 345,390 335,430 300,380', '395,420 410,370 450,375 440,420 410,470', '180,200 210,220 215,260 185,255', '590,525 640,525 620,540'],
    water: ['760,320 795,340 798,380 765,335', '165,665 185,615 180,640', '518,1010 525,1020 530,1068', '215,1096 260,1100 225,1104', '1462,140 1466,140 1465,170', '490,900 497,945 494,945'],
    thin: [
      '130,240 120,260 130,320 200,390 235,450 240,560 290,550 340,470', '220,430 130,510 70,600 40,630 0,610', '200,132 235,170 260,230', '540,132 525,180 530,250 545,290 540,400 530,470', '545,390 590,335 640,340 720,315 810,220 845,132', '350,310 400,285 440,280 500,235 530,180', '320,290 305,330 340,470', '510,530 480,600 475,690 515,750 540,830 565,860',
      '485,700 450,770 420,780 415,860 400,910 420,950 460,950 490,1060 505,1150 560,1270', '350,520 400,490 430,500 460,530 510,510', '350,520 340,590 300,630 295,690 270,760 180,820 140,860 130,930 70,990 30,1030 20,1060', '0,700 40,740 80,850 140,860', '180,820 210,860 210,1000 225,1090 270,1100 290,1000 370,920 400,910', '270,1100 280,1160 250,1200 240,1330',
      '690,610 700,700 720,780 680,860 690,950 730,990 770,940 830,930 930,928', '690,950 670,1010 700,1060 730,1110 800,1160', '900,670 930,700 950,735 980,710 1020,750 1080,765 1128,820', '1190,730 1250,820 1280,850 1300,1030 1340,1030 1350,985 1380,1020 1480,990', '1230,705 1280,760 1330,775 1380,690 1400,640 1430,620', '1240,340 1260,240 1285,132', '1230,340 1240,530', '1260,258 1300,258',
      '1060,1220 1120,1170 1180,1150 1240,1090 1300,1030', '1440,340 1490,345', '1430,620 1440,720 1430,800 1480,900 1490,990', '70,990 210,1100 220,1160 165,1210', '1110,460 1150,488', '780,1330 860,1270 950,1260 1000,1230 1040,1230', '270,740 360,790 420,790', '10,1250 60,1280 80,1310 160,1230', '845,140 885,155 920,132', '1420,1320 1420,1270 1490,1260',
    ],
    medium: [
      '205,232 295,232 320,290 350,340 400,400 440,430 490,505 515,525', '640,600 750,628 770,618 810,628 890,612', '915,535 1060,540 1070,548 1098,548 1110,520 1150,488 1170,490 1200,530 1235,535', '1250,590 1250,615 1225,625 1235,650 1228,705 1200,705 1160,760 1128,820 1120,920 1105,940 1110,1000 1110,1050 1075,1140 1060,1215', '845,132 880,230 915,320 918,400', '1390,575 1440,520 1480,470 1490,465',
      '0,1060 50,1065 100,1120 110,1200 165,1220 205,1330', '0,605 5,700', '940,950 950,1080 985,1150 1040,1230 1030,1330',
    ],
    major: ['-5,356 60,280 75,275 85,262 110,250 130,242', '130,160 130,242', '928,125 928,190 945,280 945,340 935,400', '922,440 908,540 890,600 895,700 908,800 928,870 935,950 950,1010 960,1080 985,1130 1000,1150', '1040,1190 1060,1215', '1110,1270 1130,1330'],
    region: ['110,132 115,180', '190,180 215,215 265,195 280,160 320,178 350,135 400,200 395,132', '525,135 575,165 610,240 670,320 705,390 695,460', '725,535 745,550 755,620 740,680 758,770 740,850 745,890 715,930 690,905 660,895 650,920 643,1000 648,1040 610,1080 585,1150 570,1165 600,1240 640,1290'],
  },
  // Cuenca
  {
    x: 2050, y: 1380, sx: E,
    light: [
      '240,200 340,60 360,0 780,0 770,100 860,0 1040,0 1000,120 1180,200 1250,270 1300,300 1300,420 1240,480 1230,560 1180,600 1190,700 1250,740 1240,780 1190,850 1250,890 1300,960 560,960 500,860 440,800 420,700 370,700 330,640 250,600 270,480 200,460 220,430 300,500 330,440 370,420 440,500 440,560 540,620 600,610 600,520 500,500 540,420 380,380 330,250',
      '1120,30 1300,60 1490,0 1490,400 1400,380 1320,240 1200,140', '170,280 210,260 240,330 220,390 160,360', '130,220 170,210 170,240', '350,800 400,810 390,850 350,840', '1440,640 1490,560 1490,960 1420,960 1430,800', '300,860 330,900 400,960 310,960', '20,0 80,0 60,20',
    ],
    forest: [
      '270,60 300,70 360,280 340,350 300,290 260,160', '380,0 560,0 640,60 760,170 700,200 560,180 400,200 380,120', '200,450 260,480 300,530 360,590 460,610 470,660 420,700 390,710 320,640 300,730 260,650', '440,380 540,420 520,500 440,510 430,420', '870,20 940,20 960,100 930,180 880,150', '960,320 1030,320 1075,400 1010,460 960,440',
      '880,740 910,700 960,740 920,850 890,820', '840,810 900,840 880,900 840,960', '960,830 1060,690 1080,760 1140,860 1120,960 950,960', '1140,720 1210,640 1240,700 1200,820 1150,780', '1450,740 1490,640 1490,960 1450,960', '960,560 1030,580 1010,640 960,620', '80,520 115,550 90,570', '490,220 600,240 640,330 580,340 500,280', '1350,240 1380,230 1380,270',
      '420,840 500,870 480,960 450,900', '1190,0 1260,0 1270,40 1200,60', '200,290 230,310 210,380 170,340', '550,730 600,690 640,720 590,760',
    ],
    land: [
      '500,510 600,500 600,560 560,620 500,560', '650,700 720,740 710,770 650,740', '640,780 690,800 680,840 640,830', '755,420 800,410 800,470 760,460', '790,560 880,470 910,480 890,600 840,620 790,610', '1050,640 1100,560 1150,590 1130,680 1100,720 1060,700', '1260,640 1330,590 1380,660 1390,740 1320,760 1290,700', '1190,790 1300,760 1310,820 1230,860', '1080,400 1150,350 1200,390 1160,440 1100,450',
      '960,860 985,810 990,870 960,930', '1000,230 1040,220 1050,300 960,300', '1100,220 1160,240 1150,330 1110,300', '700,0 860,0 820,80 770,90', '880,620 940,600 940,680 890,660', '1310,90 1370,80 1380,180 1320,190', '580,950 640,920 660,960',
    ],
    sand: ['510,280 540,250 560,320 545,420 520,380', '600,170 630,180 620,200'],
    rock: ['455,300 480,262 480,300 465,315'],
    water: ['230,845 240,845 270,910 298,870 290,954 255,954 262,930', '1030,840 1060,855 1050,865', '1173,920 1185,954 1178,954', '545,485 570,445 560,465', '1040,785 1050,815 1045,812', '0,825 15,790 8,815'],
    thin: [
      '80,20 70,110 50,180 0,190', '0,280 40,265 110,300 150,350 210,358', '345,380 335,290 350,230', '360,440 340,590 350,680 300,850 320,960', '0,600 40,480 40,430', '190,810 230,790 270,860 300,850', '510,870 545,960', '565,615 565,700 600,780 720,840 780,850 810,880 825,960', '680,470 740,485 800,570 845,620 860,760 810,880', '620,180 660,200 650,300 680,410',
      '935,410 940,480 950,550 1000,560 1055,640 1060,760 1150,880 1180,905 1235,905', '1080,500 1150,450 1250,400 1285,300', '1180,150 1250,160 1300,120 1360,205 1410,100 1420,20', '1360,205 1330,210 1300,270', '1480,380 1430,330 1395,295', '1460,740 1450,850 1470,960', '0,840 30,800 90,710 150,670 190,710', '155,810 200,818', '845,620 878,608', '240,0 235,100 215,120',
    ],
    medium: [
      '175,0 215,70 220,120 260,200 275,290 335,420 360,425', '345,400 335,425 280,470 265,510 270,580 260,650 210,665 190,710 190,850', '360,425 410,485 420,540 440,570 500,578 525,565 540,608 585,613 610,575 635,575 660,500 680,410 715,352 750,345 810,340 860,315 910,310 950,340',
      '1045,0 1010,110 980,180 955,290 950,340 935,410 910,450 905,500 918,580 878,608 900,660 950,720 940,790 965,850 950,960', '360,425 380,545 420,635 425,715 490,790 505,870 490,960', '75,960 95,925 112,925',
    ],
    major: ['-5,448 70,388 100,398 190,403 215,372 290,368 300,362 335,372', '-5,650 70,680 95,715 145,785 155,855', '1115,0 1130,60 1180,190 1310,320 1320,415', '1430,600 1480,715 1495,717', '1235,905 1310,903', '175,940 182,960'],
    region: ['620,5 690,100 755,200 780,190 800,210 825,200 820,270 885,290 905,260 905,200 920,180 945,250 960,315 1025,315 1055,360 1075,400 1065,430 1010,465 955,483 905,455 870,460 840,340 810,285', '1015,465 1030,525 1080,510 1140,510 1175,535 1190,570 1190,650 1215,695 1265,645 1240,600 1235,540 1250,500 1280,480 1295,420 1340,415 1390,380 1385,310 1420,260 1425,200 1440,120 1490,150', '1030,525 985,550 990,640 975,750 940,850 945,910 910,945 870,920 850,960'],
  },
  // Madrid
  {
    x: 1540, y: 1240, sx: 0.3333,
    light: [
      '490,480 550,480 550,550 510,550', '500,610 550,570 600,600 560,650 490,680', '690,590 750,570 780,620 770,660 730,650', '475,730 580,690 600,700 520,740',
      '1000,220 1060,210 1130,160 1170,200 1080,240 1040,310 1000,360 930,430 900,490 940,500 920,530 900,560 820,560 830,520 880,480 920,430 870,400 940,380 940,300 980,290', '450,820 560,825 650,840 600,850 500,860 470,930 400,920 290,960 220,940 310,880 430,850', '610,500 650,500 650,530 600,520', '560,340 600,360 600,420 560,390', '940,50 1000,40 1010,80 950,80',
    ],
    sand: ['50,400 60,370 80,480 130,590 90,600 50,560'],
    thin: [
      '500,600 490,670 470,690 490,750', '640,560 640,660 670,700 600,730 560,790 500,805', '670,690 740,710 780,700 830,660', '740,570 850,540 890,500 915,440', '915,440 800,405 620,440', '915,440 980,380 1000,370 1150,380 1200,360', '720,760 725,920', '870,410 840,340 760,290', '560,560 640,575 740,570', '250,330 330,300 420,220', '340,220 400,330 470,250',
      '360,200 420,350', '400,280 560,290', '300,260 440,320 500,300', '240,440 260,500 320,540', '200,500 250,500 260,560 200,600', '260,560 300,520 330,560', '100,470 140,500 120,560', '580,0 575,45 520,70', '690,0 670,60 600,130', '980,380 970,420 1130,470 1200,440', '830,660 960,580 1010,630 1080,640 1130,660 1200,650', '410,660 470,660', '170,600 160,670 220,760',
      '940,70 1000,80 945,120', '420,170 430,260 480,340', '370,230 480,230', '390,250 450,280', '330,400 400,340 450,300',
    ],
    medium: ['370,545 400,580 470,575', '1010,30 1050,60 1080,65 1115,140 1200,125', '240,400 210,430 240,480 300,510', '1115,140 1120,180 1180,190'],
    major: [
      '490,0 495,60 470,100 475,130 475,205 460,240', '475,130 530,118 570,135 595,172 670,165 685,150 780,135 830,100', '595,172 590,210 570,240 550,255 470,265', '565,240 600,240 680,215 740,175', '685,150 700,185 680,215 680,250', '425,180 470,170', '425,180 430,215 470,265', '425,180 400,170 370,180 375,200', '30,225 55,210 90,238 175,245 220,270',
      '150,100 155,180 175,240 160,330 200,430 240,445 320,495 380,505', '175,190 190,210 300,235 360,210 400,170', '220,270 260,240 320,240', '220,270 235,310 230,340 280,390', '165,328 250,328', '0,500 90,480 200,440', '0,520 60,520 160,525 210,480 240,445 290,400', '160,525 180,550 185,600',
      '240,445 200,520 165,600 130,640 125,660 155,690 155,710', '320,495 280,560 265,620 245,650 225,710', '345,500 325,540 320,600 370,640 405,690 400,735', '380,500 380,590 405,690 415,740', '400,430 350,470 320,495', '400,420 490,380 540,350', '390,390 460,350 480,300', '380,310 470,350 545,390 600,450 680,470 740,530', '440,350 460,390 500,420', '400,190 405,260 440,350',
      '620,340 640,400 690,480 740,530 760,570 820,660', '600,465 650,510 740,530', '820,660 930,700 970,730 1000,770 1090,850 1110,895', '0,690 30,720 95,750', '400,820 430,860 490,900', '145,795 95,870 60,960', '190,800 165,850 185,920 190,960', '220,800 260,850 245,890 265,945', '340,0 345,30 360,80', '210,390 290,370',
    ],
    region: [
      '0,540 15,545 50,595 110,600 170,625 225,665 255,650 310,705 350,688 400,700 450,735 470,750 460,800 440,840', '815,130 830,115 870,118 890,150', '970,275 990,320 970,400 935,450 930,510 945,560 970,530 1020,490 1045,570 1040,640 1055,665 1030,690 1060,720 1075,760 1030,800 960,805 945,765 910,810 830,825 770,785 725,790 715,840 640,830 600,838 570,835 560,870 490,880 450,910 440,940 380,960',
      '440,840 340,900 330,940 280,960',
    ],
  },
];

const places = [
  { x: 832, y: 1019, lines: ['Ledesma'], dot: [825, 1018] },
  { x: 957, y: 1076, lines: ['Salamanca'], dot: [948, 1075], city: true },
  { x: 1122, y: 1098, lines: ['Peñaranda de', 'Bracamonte'], dot: [1116, 1109] },
  { x: 638, y: 1242, lines: ['Ciudad', 'Rodrigo'], dot: [632, 1253] },
  { x: 513, y: 1247, lines: ['Vilar Formoso'], dot: [521, 1246], end: true },
  { x: 951, y: 1273, lines: ['Guijuelo'], dot: [944, 1272] },
  { x: 918, y: 1355, lines: ['Béjar'], dot: [911, 1354] },
  { x: 883, y: 1409, lines: ['Hervás'], dot: [876, 1409] },
  { x: 922, y: 1498, lines: ['Jaraíz de', 'la Vera'], dot: [916, 1510] },
  { x: 804, y: 1520, lines: ['Plasencia'], dot: [795, 1519] },
  { x: 592, y: 1506, lines: ['Moraleja'], dot: [586, 1506] },
  { x: 635, y: 1545, lines: ['Coria'], dot: [629, 1545] },
  { x: 1002, y: 1578, lines: ['Navalmoral', 'de la Mata'], dot: [996, 1590] },
  { x: 1261, y: 1545, lines: ['Talavera', 'de la Reina'], dot: [1253, 1556] },
  { x: 1522, y: 1088, lines: ['Segovia'], dot: [1514, 1088] },
  { x: 1314, y: 1226, lines: ['Ávila'], dot: [1306, 1225] },
  { x: 1682, y: 1260, lines: ['San Sebastián', 'de los Reyes'], dot: [1690, 1272], end: true },
  { x: 1593, y: 1386, lines: ['Móstoles'], dot: [1602, 1385], end: true, city: true },
  { x: 1659, y: 1392, lines: ['Getafe'], city: true },
  { x: 1789, y: 1297, lines: ['Alcala de', 'Henares'], dot: [1783, 1308] },
  { x: 1867, y: 1238, lines: ['Guadalajara'], dot: [1859, 1237] },
  { x: 1551, y: 1602, lines: ['Toledo'], dot: [1543, 1602], city: true },
  { x: 2053, y: 1028, lines: ['Sigüenza'], dot: [2046, 1028] },
  { x: 2330, y: 1124, lines: ['Molina de', 'Aragón'], dot: [2323, 1136] },
  { x: 2543, y: 1100, lines: ['Calamocha'], dot: [2537, 1100] },
  { x: 2709, y: 1151, lines: ['Utrillas'], dot: [2702, 1150] },
  { x: 2490, y: 1345, lines: ['Albarracín'], dot: [2484, 1345] },
  { x: 2616, y: 1374, lines: ['Teruel'], dot: [2606, 1374] },
  { x: 2240, y: 1506, lines: ['Cuenca'], dot: [2231, 1506] },
];

const parks = [
  { x: 1091, y: 1395, lines: ['Parque', 'Regional', 'de la Sierra', 'de Gredos'] },
  { x: 2328, y: 1397, lines: ['Parque Natural', 'de la Serranía', 'de Cuenca'] },
];

const shields = [
  { x: 682, y: 1201, w: 50, name: 'E-80' },
  { x: 962, y: 1228, w: 60, name: 'E-803' },
  { x: 769, y: 1551, w: 60, name: 'E-803' },
  { x: 1358, y: 1137, w: 54, name: 'AP-6', blue: true },
  { x: 1490, y: 1145, w: 64, name: 'AP-61', blue: true },
  { x: 1689, y: 1091, w: 40, name: 'E-5' },
  { x: 1938, y: 1152, w: 50, name: 'E-90' },
  { x: 1819, y: 1259, w: 42, name: 'R-2', blue: true },
  { x: 1603, y: 1490, w: 64, name: 'AP-41', blue: true },
  { x: 1673, y: 1499, w: 42, name: 'R-4', blue: true },
  { x: 1979, y: 1575, w: 60, name: 'E-901' },
  { x: 1743, y: 1638, w: 40, name: 'E-5' },
  { x: 2140, y: 1679, w: 60, name: 'E-901' },
  { x: 2119, y: 998, w: 50, name: 'E-90' },
  { x: 1885, y: 1707, w: 64, blue: true },
];

type Layer = Exclude<keyof Tile, 'x' | 'y' | 'sx'>;

function Areas({ layer, fill, stroke = 'none' }: { layer: Layer; fill: string; stroke?: string }) {
  return (
    <g fill={fill} stroke={stroke} strokeWidth="5" strokeLinejoin="round">
      {tiles.map((t, i) => (
        <g key={i} transform={`translate(${t.x} ${t.y}) scale(${t.sx} 0.3333)`}>
          {t[layer]?.map((points, j) => (
            <polygon key={j} points={points} vectorEffect="non-scaling-stroke" />
          ))}
        </g>
      ))}
    </g>
  );
}

function Lines({ layer, stroke, width, dash }: { layer: Layer; stroke: string; width: number; dash?: string }) {
  return (
    <g fill="none" stroke={stroke} strokeWidth={width} strokeLinejoin="round" strokeDasharray={dash}>
      {tiles.map((t, i) => (
        <g key={i} transform={`translate(${t.x} ${t.y}) scale(${t.sx} 0.3333)`}>
          {t[layer]?.map((points, j) => (
            <polyline key={j} points={points} vectorEffect="non-scaling-stroke" />
          ))}
        </g>
      ))}
    </g>
  );
}

function MapCanvas() {
  return (
    <svg
      viewBox="462 1004 2376 800"
      preserveAspectRatio="xMidYMin slice"
      className="absolute inset-0 h-full w-full"
      fontFamily="Roboto, sans-serif"
      role="img"
      aria-label="Map of central Spain"
    >
      <rect x="0" y="900" width="4000" height="1200" fill="#f5efe5" />
      <Areas layer="light" fill="#cff6e0" />
      <Areas layer="forest" fill="#b2f0cd" stroke="#bff3d5" />
      <Areas layer="land" fill="#f5efe5" stroke="#f5efe5" />
      <Areas layer="sand" fill="#f2e6d5" />
      <Areas layer="rock" fill="#cfcfcb" />
      <polygon points="1640,1310 1670,1290 1695,1300 1700,1325 1740,1350 1700,1390 1640,1430 1600,1430 1600,1400 1620,1370" fill="#e9ecf5" />
      <polygon points="1706,1284 1714,1286 1722,1310 1728,1322 1704,1322" fill="#c9d3f7" />
      <Areas layer="water" fill="#7fd7ee" />
      <Lines layer="thin" stroke="#c2c9da" width={2} />
      <Lines layer="medium" stroke="#a9bbdd" width={3} />
      <Lines layer="region" stroke="#5b625f" width={2} dash="5 5" />
      <Lines layer="major" stroke="#8798c4" width={6} />
      <Lines layer="major" stroke="#a9b8dc" width={4} />
      <Lines layer="country" stroke="#1f2a28" width={3} />

      {shields.map((s, i) => (
        <g key={i}>
          <rect x={s.x - s.w / 2} y={s.y - 15} width={s.w} height="30" rx="6" fill={s.blue ? '#8fb0e0' : '#a3ba86'} />
          <rect x={s.x - s.w / 2 + 2} y={s.y - 13} width={s.w - 4} height="26" rx="4" fill="#fff" />
          <rect x={s.x - s.w / 2 + 4} y={s.y - 11} width={s.w - 8} height="22" rx="3" fill={s.blue ? '#3876c8' : '#6ba23c'} />
          {s.name && (
            <text x={s.x} y={s.y + 7} textAnchor="middle" fontSize="19" fontWeight="500" fill="#fff">
              {s.name}
            </text>
          )}
        </g>
      ))}

      <g fill="#2c3035" stroke="#fff" strokeWidth="5" strokeLinejoin="round" paintOrder="stroke">
        {places.map((p) => (
          <g key={p.lines[0]} fontSize={p.city ? 26 : 24} fontWeight={p.city ? 500 : 400} textAnchor={p.end ? 'end' : 'start'}>
            {p.lines.map((line, i) => (
              <text key={line} x={p.x} y={p.y + 8 + i * 24}>
                {line}
              </text>
            ))}
          </g>
        ))}
        <text x="1672" y="1353" fontSize="36" fontWeight="500">
          Madrid
        </text>
      </g>
      <g fill="#f4f5f5" stroke="#2c3035" strokeWidth="2">
        {places.map((p) => p.dot && <circle key={p.lines[0]} cx={p.dot[0]} cy={p.dot[1]} r={p.city ? 5 : 4} />)}
      </g>
      <g fill="#1f8a63" stroke="#fff" strokeWidth="5" strokeLinejoin="round" paintOrder="stroke" fontSize="28" fontStyle="italic" textAnchor="middle">
        {parks.map((p) =>
          p.lines.map((line, i) => (
            <text key={line} x={p.x} y={p.y + 9 + i * 28}>
              {line}
            </text>
          )),
        )}
      </g>

      {/* marker */}
      <circle cx="1651" cy="1392" r="6" fill="#111" />
      <path
        d="M1650 1394c-2 0-2-3-3-7-4-14-22-22-22-41a25 25 0 0 1 50 0c0 19-18 27-22 41-1 4-1 7-3 7z"
        fill="#ea4335"
        stroke="#c5221f"
        strokeWidth="2"
      />
      <circle cx="1650" cy="1346" r="10" fill="#b31412" />
    </svg>
  );
}

function MapButton({ label, className, children }: { label: string; className: string; children: ReactNode }) {
  return (
    <button type="button" aria-label={label} className={`flex h-20 w-20 items-center justify-center bg-white text-[#666] shadow-md ${className}`}>
      {children}
    </button>
  );
}

function DeviceLocation() {
  return (
    <section className="overflow-hidden rounded-lg border-2 border-[#dee5e7] bg-[#f6f8f8]">
      <h2 className="flex h-[92px] items-center gap-[6px] px-[30px] pb-3 text-[25px] text-[#333]">
        Device Location
        <FaInfoCircle className="h-7 w-7 text-[#98a6ad]" />
      </h2>
      <div className="relative h-[800px] font-[Roboto,sans-serif]">
        <MapCanvas />
        <div className="absolute top-5 left-5 flex h-20 rounded bg-white text-[36px] shadow-md">
          <button type="button" className="border-r-2 border-[#eee] px-[33px] font-medium text-black">
            Map
          </button>
          <button type="button" className="px-[33px] text-[#565656]">
            Satellite
          </button>
        </div>
        <div className="absolute top-5 right-5">
          <MapButton label="Full screen" className="rounded">
            <svg viewBox="0 0 36 36" className="h-9 w-9" fill="none" stroke="currentColor" strokeWidth="5" aria-hidden="true">
              <path d="M2.500 12V2.500H12M24 2.500h9.500V12M33.500 24v9.500H24M12 33.500H2.500V24" />
            </svg>
          </MapButton>
        </div>
        <div className="absolute right-5 bottom-[68px] flex flex-col gap-16">
          <MapButton label="Move map" className="rounded-full">
            <svg viewBox="0 0 48 48" className="h-12 w-12" fill="none" stroke="currentColor" strokeWidth="5" aria-hidden="true">
              <path d="M17 10l7-7 7 7M17 38l7 7 7-7M10 17l-7 7 7 7M38 17l7 7-7 7" />
            </svg>
          </MapButton>
          <MapButton label="Street View" className="rounded">
            <svg viewBox="0 0 32 60" className="h-[60px] w-8" stroke="#6b7a86" strokeWidth="1" aria-hidden="true">
              <path d="M8 20h16c3 2 5 10 5 18H3c0-8 2-16 5-18z" fill="#fbbc1d" />
              <path d="M11 20h10l-5 11z" fill="#e37b2c" stroke="none" />
              <path d="M8 38h16v20H8z" fill="#fbbc1d" />
              <circle cx="16" cy="11" r="10" fill="#fbbc1d" />
            </svg>
          </MapButton>
        </div>
      </div>
    </section>
  );
}

function Footer() {
  return (
    <footer className="flex h-[102px] shrink-0 items-center justify-between border-t-2 border-[#e1e4ea] bg-[#f3f5f6] pr-[29px] pl-[30px] text-[25px] text-[#4b5666]">
      <span>THINGER.IO © 2026</span>
      <span className="flex items-center gap-[26px] font-bold">
        7.4.0
        <FaLongArrowAltUp className="h-7 w-4 text-[#98a6ad]" />
      </span>
    </footer>
  );
}

export default function App() {
  return (
    <div className="flex h-screen overflow-hidden bg-[#f3f4f6] font-['Noto_Sans_CJK_SC',sans-serif]">
      <Sidebar />
      <div className="flex min-w-0 flex-1 flex-col">
        <TopBar />
        <SubBar />
        <main className="min-h-0 flex-1 overflow-hidden p-10">
          <div className="grid grid-cols-2 gap-[60px]">
            <Stats />
            <LiveTransmission />
          </div>
          <div className="mt-10">
            <DeviceLocation />
          </div>
        </main>
        <Footer />
      </div>
    </div>
  );
}
